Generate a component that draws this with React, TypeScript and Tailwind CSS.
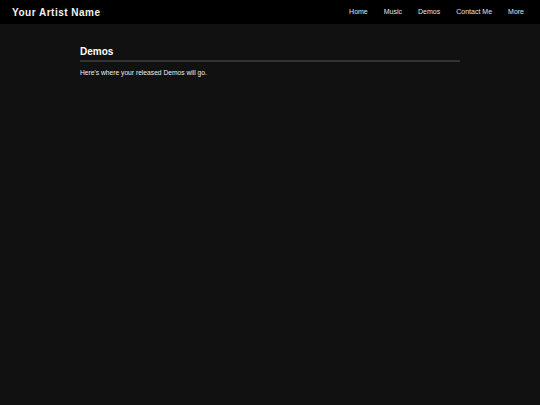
export default function App() {
  const links = ['Home', 'Music', 'Demos', 'Contact Me', 'More'];

  return (
    <div className="min-h-screen bg-[#111111] text-white font-['Liberation_Sans',Arial,sans-serif] antialiased">
      {/* Top bar */}
      <header className="h-6 bg-black flex items-center justify-between pl-3 pr-4">
        <div className="text-[10px] font-bold tracking-[0.5px] text-[#f2f2f2]">Your Artist Name</div>
        <nav className="flex items-center gap-4 text-[7px] text-[#e6e6e6]">
          {links.map((l) => (
            <a key={l} href="#">
              {l}
            </a>
          ))}
        </nav>
      </header>

      {/* Page body */}
      <main className="w-[380px] mx-auto pt-[21px]">
        <h1 className="text-[10px] font-bold leading-[14px] pb-[1px] border-b-2 border-[#333333]">Demos</h1>
        <p className="mt-[6px] text-[6.7px] text-[#eeeeee]">Here's where your released Demos will go.</p>
      </main>
    </div>
  );
}
